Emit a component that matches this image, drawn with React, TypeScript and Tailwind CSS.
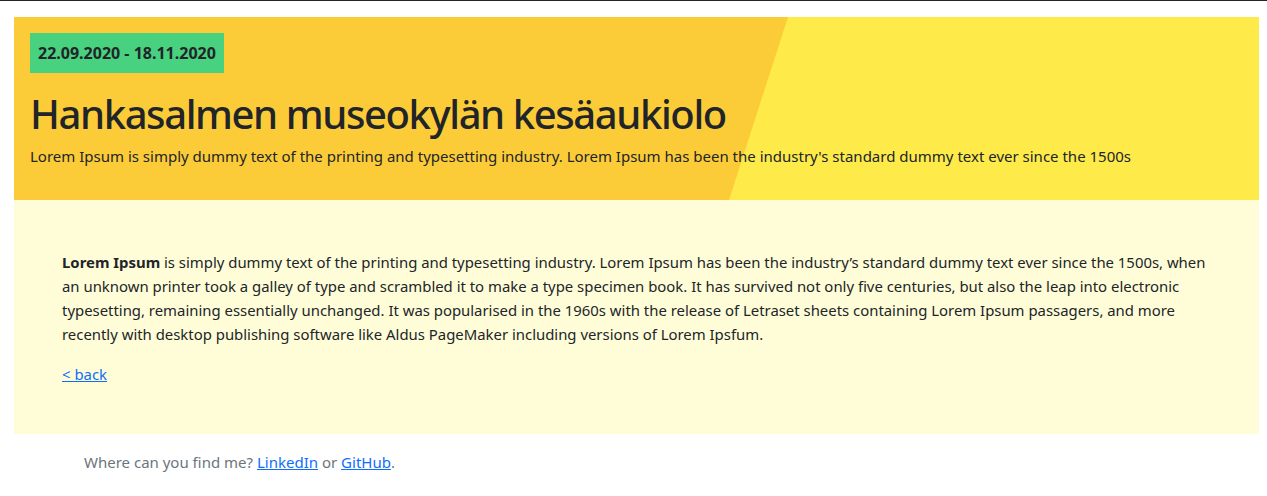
import React from 'react';

const font = { fontFamily: '"Noto Sans", "Open Sans", sans-serif' };

export default function App() {
  return (
    <div className="min-h-[496px] bg-white border-t border-[#212529] text-[#212529]" style={font}>
      <div className="pl-[14px] pr-2 pt-4">
        <header className="relative overflow-hidden bg-[#feeb4a] h-[183px] px-4 pt-4">
          <div className="absolute inset-0 bg-[#fccc38] [clip-path:polygon(0_0,774px_0,715px_100%,0_100%)]" />
          <div className="relative">
            <span className="inline-block bg-[#48d17f] px-2 h-10 leading-10 text-[16px] font-bold">
              22.09.2020 - 18.11.2020
            </span>
            <h1 className="mt-[17px] text-[40px] leading-[48px] font-medium tracking-[-1.4px]">
              Hankasalmen museokylän kesäaukiolo
            </h1>
            <p className="mt-[6px] text-[15px] leading-6">
              Lorem Ipsum is simply dummy text of the printing and typesetting industry. Lorem Ipsum has been the
              industry's standard dummy text ever since the 1500s
            </p>
          </div>
        </header>
        <main className="bg-[#fffdd8] px-12 pt-[50px] pb-[48px] text-[14.9px] leading-6">
          <p>
            <strong>Lorem Ipsum</strong> is simply dummy text of the printing and typesetting industry. Lorem Ipsum has
            been the industry’s standard dummy text ever since the 1500s, when an unknown printer took a galley of type
            and scrambled it to make a type specimen book. It has survived not only five centuries, but also the leap
            into electronic typesetting, remaining essentially unchanged. It was popularised in the 1960s with the
            release of Letraset sheets containing Lorem Ipsum passagers, and more recently with desktop publishing
            software like Aldus PageMaker including versions of Lorem Ipsfum.
          </p>
          <p className="mt-4">
            <a href="#" className="text-[#0d6efd] underline">&lt; back</a>
          </p>
        </main>
        <footer className="px-[70px] pt-4 text-[15px] leading-6 text-[#6c757d]">
          Where can you find me?{' '}
          <a href="#" className="text-[#0d6efd] underline">LinkedIn</a> or{' '}
          <a href="#" className="text-[#0d6efd] underline">GitHub</a>.
        </footer>
      </div>
    </div>
  );
}
